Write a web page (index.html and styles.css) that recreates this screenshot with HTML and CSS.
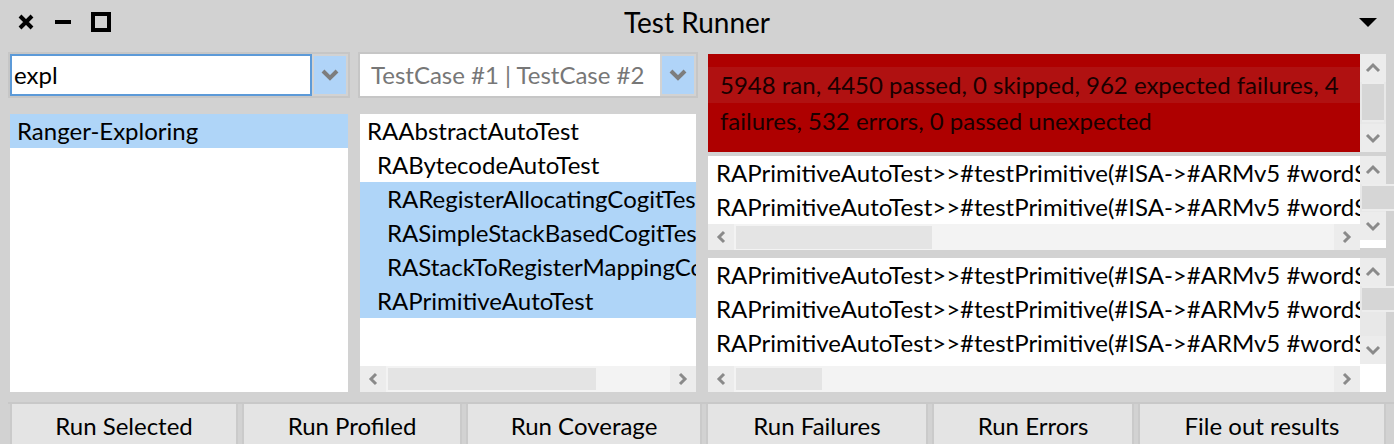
FILE: index.html
```html
<!DOCTYPE html>
<html>
<head lang="en">
    <meta charset="UTF-8">
    <title>Test Runner</title>
    <link rel="stylesheet" href="styles.css">
</head>
<body>
<div class="titlebar">
    <div class="controls">
        <svg class="ctl" width="18" height="16" viewBox="0 0 18 16"><path d="M3 2 L15 14 M15 2 L3 14" stroke="#000" stroke-width="4" fill="none"/></svg>
        <svg class="ctl" width="18" height="16" viewBox="0 0 18 16"><path d="M1 8 L17 8" stroke="#000" stroke-width="4" fill="none"/></svg>
        <svg class="ctl" width="20" height="20" viewBox="0 0 20 20"><rect x="2" y="2" width="16" height="16" stroke="#000" stroke-width="4" fill="none"/></svg>
    </div>
    <div class="title">Test Runner</div>
    <svg class="menu" width="18" height="9" viewBox="0 0 18 9"><path d="M0 0 L18 0 L9 9 Z" fill="#000"/></svg>
</div>

<div class="panes">
    <!-- packages -->
    <div class="col">
        <div class="combo">
            <div class="field focused">expl</div>
            <div class="drop"><svg width="18" height="12" viewBox="0 0 18 12"><path d="M2 2 L9 9 L16 2" stroke="#7d7d7d" stroke-width="4" fill="none"/></svg></div>
        </div>
        <div class="list">
            <div class="row selected">Ranger-Exploring</div>
        </div>
    </div>

    <!-- classes -->
    <div class="col">
        <div class="combo">
            <div class="field hint">TestCase #1 | TestCase #2</div>
            <div class="drop"><svg width="18" height="12" viewBox="0 0 18 12"><path d="M2 2 L9 9 L16 2" stroke="#7d7d7d" stroke-width="4" fill="none"/></svg></div>
        </div>
        <div class="list">
            <div class="rows">
                <div class="row">RAAbstractAutoTest</div>
                <div class="row lvl1">RABytecodeAutoTest</div>
                <div class="row lvl2 selected">RARegisterAllocatingCogitTest</div>
                <div class="row lvl2 selected">RASimpleStackBasedCogitTest</div>
                <div class="row lvl2 selected">RAStackToRegisterMappingCogitTest</div>
                <div class="row lvl1 selected">RAPrimitiveAutoTest</div>
            </div>
            <div class="hscroll">
                <div class="sbtn"><svg width="12" height="14" viewBox="0 0 12 14"><path d="M9 2 L4 7 L9 12" stroke="#8a8a8a" stroke-width="3" fill="none"/></svg></div>
                <div class="htrack"><div class="hthumb thumb-classes"></div></div>
                <div class="sbtn"><svg width="12" height="14" viewBox="0 0 12 14"><path d="M3 2 L8 7 L3 12" stroke="#8a8a8a" stroke-width="3" fill="none"/></svg></div>
            </div>
        </div>
    </div>

    <!-- results -->
    <div class="col results">
        <div class="panel summary-panel">
            <div class="summary">
                <div class="line hl">5948 ran, 4450 passed, 0 skipped, 962 expected failures, 4</div>
                <div class="line">failures, 532 errors, 0 passed unexpected</div>
            </div>
            <div class="vscroll">
                <div class="vbtn up"><svg width="16" height="12" viewBox="0 0 16 12"><path d="M2 9 L8 3 L14 9" stroke="#8a8a8a" stroke-width="3" fill="none"/></svg></div>
                <div class="vtrack"><div class="vthumb thumb-summary"></div></div>
                <div class="vbtn down"><svg width="16" height="12" viewBox="0 0 16 12"><path d="M2 3 L8 9 L14 3" stroke="#8a8a8a" stroke-width="3" fill="none"/></svg></div>
            </div>
        </div>

        <div class="panel failures">
            <div class="body">
                <div class="rows">
                    <div class="row">RAPrimitiveAutoTest&gt;&gt;#testPrimitive(#ISA-&gt;#ARMv5 #wordSize-&gt;4 #primitive-&gt;#primitiveAdd)</div>
                    <div class="row">RAPrimitiveAutoTest&gt;&gt;#testPrimitive(#ISA-&gt;#ARMv5 #wordSize-&gt;4 #primitive-&gt;#primitiveSubtract)</div>
                </div>
                <div class="hscroll">
                    <div class="sbtn"><svg width="12" height="14" viewBox="0 0 12 14"><path d="M9 2 L4 7 L9 12" stroke="#8a8a8a" stroke-width="3" fill="none"/></svg></div>
                    <div class="htrack"><div class="hthumb thumb-failures"></div></div>
                    <div class="sbtn"><svg width="12" height="14" viewBox="0 0 12 14"><path d="M3 2 L8 7 L3 12" stroke="#8a8a8a" stroke-width="3" fill="none"/></svg></div>
                </div>
            </div>
            <div class="vscroll">
                <div class="vbtn up"><svg width="16" height="12" viewBox="0 0 16 12"><path d="M2 9 L8 3 L14 9" stroke="#8a8a8a" stroke-width="3" fill="none"/></svg></div>
                <div class="vtrack"><div class="vthumb thumb-failures"></div></div>
                <div class="vbtn down"><svg width="16" height="12" viewBox="0 0 16 12"><path d="M2 3 L8 9 L14 3" stroke="#8a8a8a" stroke-width="3" fill="none"/></svg></div>
                <div class="corner"></div>
            </div>
        </div>

        <div class="panel errors">
            <div class="body">
                <div class="rows">
                    <div class="row">RAPrimitiveAutoTest&gt;&gt;#testPrimitive(#ISA-&gt;#ARMv5 #wordSize-&gt;4 #primitive-&gt;#primitiveAt)</div>
                    <div class="row">RAPrimitiveAutoTest&gt;&gt;#testPrimitive(#ISA-&gt;#ARMv5 #wordSize-&gt;4 #primitive-&gt;#primitiveAtPut)</div>
                    <div class="row">RAPrimitiveAutoTest&gt;&gt;#testPrimitive(#ISA-&gt;#ARMv5 #wordSize-&gt;4 #primitive-&gt;#primitiveSize)</div>
                </div>
                <div class="hscroll">
                    <div class="sbtn"><svg width="12" height="14" viewBox="0 0 12 14"><path d="M9 2 L4 7 L9 12" stroke="#8a8a8a" stroke-width="3" fill="none"/></svg></div>
                    <div class="htrack"><div class="hthumb thumb-errors"></div></div>
                    <div class="sbtn"><svg width="12" height="14" viewBox="0 0 12 14"><path d="M3 2 L8 7 L3 12" stroke="#8a8a8a" stroke-width="3" fill="none"/></svg></div>
                </div>
            </div>
            <div class="vscroll">
                <div class="vbtn up"><svg width="16" height="12" viewBox="0 0 16 12"><path d="M2 9 L8 3 L14 9" stroke="#8a8a8a" stroke-width="3" fill="none"/></svg></div>
                <div class="vtrack"><div class="vthumb thumb-errors"></div></div>
                <div class="vbtn down"><svg width="16" height="12" viewBox="0 0 16 12"><path d="M2 3 L8 9 L14 3" stroke="#8a8a8a" stroke-width="3" fill="none"/></svg></div>
                <div class="corner tall"></div>
            </div>
        </div>
    </div>
</div>

<div class="buttons">
    <div class="button">Run Selected</div>
    <div class="button">Run Profiled</div>
    <div class="button">Run Coverage</div>
    <div class="button">Run Failures</div>
    <div class="button">Run Errors</div>
    <div class="button">File out results</div>
</div>
</body>
</html>
```

FILE: styles.css
```css
body {
    margin: 0;
    background: #d2d2d2;
    font-family: Lato, "Open Sans", sans-serif;
    font-size: 24px;
    color: #000;
    overflow: hidden;
}

/* title bar */
.titlebar {
    height: 44px;
    display: flex;
    align-items: center;
    position: relative;
}

.controls {
    display: flex;
    align-items: center;
    gap: 19px;
    padding-left: 17px;
}

.ctl {
    display: block;
}

.title {
    position: absolute;
    left: 0;
    right: 0;
    text-align: center;
    font-size: 28px;
    pointer-events: none;
}

.menu {
    margin-left: auto;
    margin-right: 17px;
}

/* three columns */
.panes {
    display: grid;
    grid-template-columns: 342px 340px 680px;
    column-gap: 8px;
    padding: 8px 0 0 8px;
    height: 340px;
}

.col {
    display: flex;
    flex-direction: column;
    gap: 16px;
}

/* dropdown field */
.combo {
    height: 46px;
    box-sizing: border-box;
    border: 2px solid #c6c6c6;
    display: flex;
    background: #d2d2d2;
}

.field {
    flex: 1;
    background: #fff;
    padding-left: 11px;
    line-height: 42px;
    white-space: nowrap;
    overflow: hidden;
}

.field.focused {
    border: 2px solid #5c9ad8;
    line-height: 38px;
    padding-left: 2px;
}

.field.hint {
    color: #777;
}

.drop {
    width: 32px;
    margin: 2px;
    background: #b0d4f8;
    display: flex;
    align-items: center;
    justify-content: center;
}

/* lists */
.list {
    flex: 1;
    margin: 0 2px;
    background: #fff;
    display: flex;
    flex-direction: column;
    overflow: hidden;
}

.rows {
    flex: 1;
}

.row {
    height: 34px;
    line-height: 34px;
    padding-left: 7px;
    white-space: nowrap;
    overflow: hidden;
}

.row.lvl1 {
    padding-left: 17px;
}

.row.lvl2 {
    padding-left: 27px;
}

.row.selected {
    background: #afd5f8;
}

/* horizontal scrollbar */
.hscroll {
    height: 26px;
    display: flex;
    background: #f3f3f3;
}

.sbtn {
    width: 26px;
    background: #ececec;
    display: flex;
    align-items: center;
    justify-content: center;
}

.htrack {
    flex: 1;
    padding: 2px;
}

.hthumb {
    height: 100%;
    background: #e4e4e4;
}

.thumb-classes {
    width: 208px;
}

.thumb-failures {
    width: 196px;
}

.thumb-errors {
    width: 86px;
}

/* results column */
.results {
    gap: 0;
    padding: 2px 0 0 2px;
}

.panel {
    display: flex;
}

.summary-panel {
    height: 98px;
}

.summary {
    flex: 1;
    background: #ae0000;
    color: #1a0000;
    padding-top: 13px;
}

.summary .line {
    height: 36px;
    line-height: 36px;
    padding-left: 12px;
    white-space: nowrap;
}

.summary .line.hl {
    background: #b01111;
}

.failures {
    height: 92px;
    margin-top: 4px;
}

.errors {
    height: 134px;
    margin-top: 10px;
}

.body {
    flex: 1;
    background: #fff;
    display: flex;
    flex-direction: column;
    min-width: 0;
}

.body .row {
    padding-left: 8px;
}

/* vertical scrollbar */
.vscroll {
    width: 26px;
    display: flex;
    flex-direction: column;
    background: #e8e8e8;
}

.vbtn {
    height: 28px;
    background: #ececec;
    display: flex;
    align-items: center;
    justify-content: center;
}

.vtrack {
    flex: 1;
    padding: 0 2px;
}

.vthumb {
    background: #d6d6d6;
    border: 2px solid #ededed;
    border-left: 0;
    border-right: 0;
}

.thumb-summary {
    height: 36px;
}

.thumb-failures {
    height: 23px;
}

.thumb-errors {
    height: 22px;
}

.corner {
    height: 8px;
    background: #fff;
}

.corner.tall {
    height: 28px;
}

/* bottom buttons */
.buttons {
    display: grid;
    grid-template-columns: 228px 220px 236px 222px 202px 248px;
    column-gap: 4px;
    margin: 10px 0 0 8px;
    padding-left: 2px;
    border-top: 2px solid #c8c8c8;
}

.button {
    height: 46px;
    line-height: 44px;
    background: #e4e4e4;
    border-left: 2px solid #cacaca;
    border-right: 2px solid #cacaca;
    text-align: center;
}
```
